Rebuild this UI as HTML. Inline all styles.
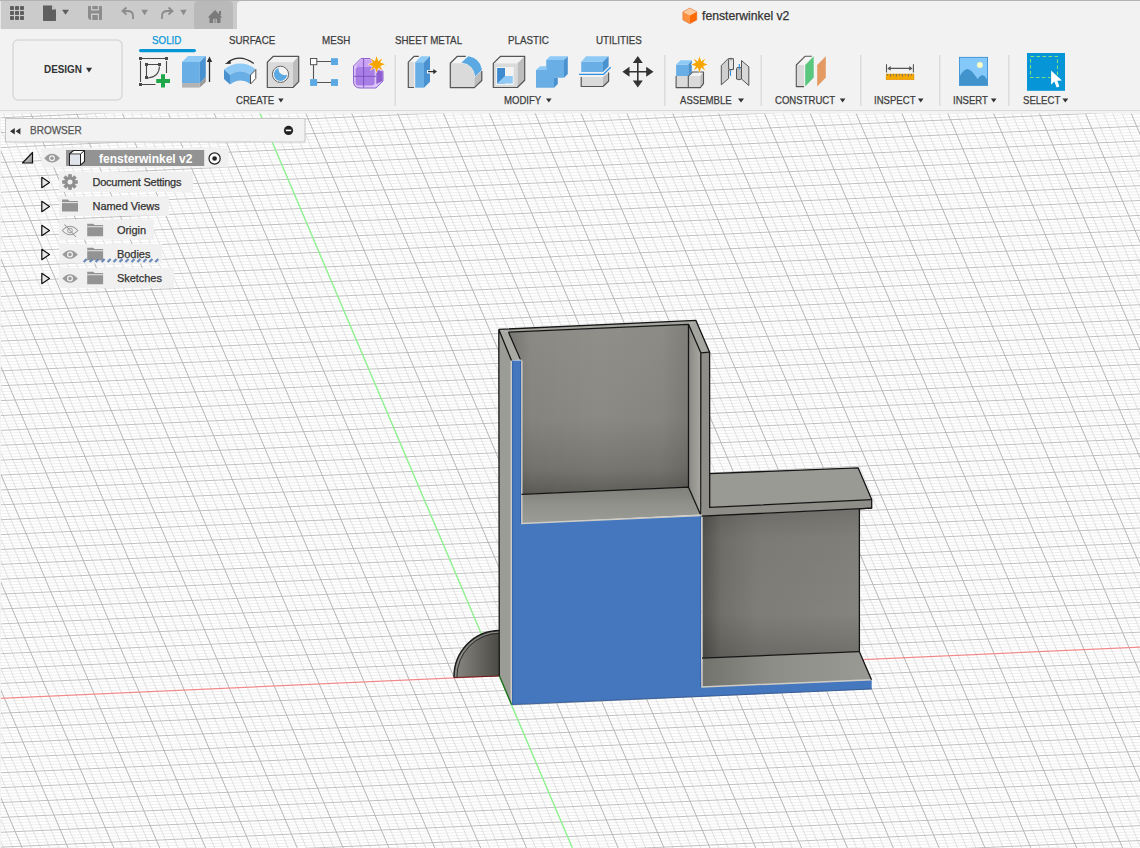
<!DOCTYPE html>
<html><head><meta charset="utf-8"><title>fensterwinkel v2</title>
<style>
html,body{margin:0;padding:0;width:1140px;height:848px;overflow:hidden;background:#f2f2f2;font-family:"Liberation Sans",sans-serif}
svg{position:absolute;left:0;top:0}
.t{position:absolute;white-space:nowrap;line-height:1;font-family:"Liberation Sans",sans-serif;-webkit-text-stroke:0.25px currentColor}
.tab{top:35px;font-size:11px;color:#3c3c3c;transform:scaleX(0.89);transform-origin:0 0}
.lbl{top:95px;font-size:11px;color:#3c3c3c;transform:scaleX(0.87);transform-origin:0 0}
.row{font-size:11px;color:#333;letter-spacing:-0.05px}
</style></head><body>
<svg width="1140" height="848" viewBox="0 0 1140 848">
<rect x="0" y="111" width="1140" height="737" fill="#ffffff"/>
<defs><clipPath id="vp"><rect x="0" y="111" width="1140" height="737"/></clipPath></defs>
<g clip-path="url(#vp)">
<path d="M0 111.9 L1140 60.6M0 114.87 L1140 63.57M0 120.83 L1140 69.53M0 123.8 L1140 72.5M0 126.78 L1140 75.48M0 129.76 L1140 78.46M0 135.71 L1140 84.41M0 138.69 L1140 87.39M0 141.67 L1140 90.37M0 144.64 L1140 93.34M0 150.6 L1140 99.3M0 153.57 L1140 102.27M0 156.55 L1140 105.25M0 159.53 L1140 108.23M0 165.48 L1140 114.18M0 168.46 L1140 117.16M0 171.44 L1140 120.13M0 174.41 L1140 123.11M0 180.37 L1140 129.07M0 183.34 L1140 132.04M0 186.32 L1140 135.02M0 189.3 L1140 138M0 195.25 L1140 143.95M0 198.23 L1140 146.93M0 201.21 L1140 149.9M0 204.18 L1140 152.88M0 210.14 L1140 158.84M0 213.11 L1140 161.81M0 216.09 L1140 164.79M0 219.07 L1140 167.77M0 225.02 L1140 173.72M0 228 L1140 176.7M0 230.98 L1140 179.67M0 233.95 L1140 182.65M0 239.91 L1140 188.61M0 242.88 L1140 191.58M0 245.86 L1140 194.56M0 248.84 L1140 197.54M0 254.79 L1140 203.49M0 257.77 L1140 206.47M0 260.75 L1140 209.44M0 263.72 L1140 212.42M0 269.68 L1140 218.38M0 272.65 L1140 221.35M0 275.63 L1140 224.33M0 278.61 L1140 227.31M0 284.56 L1140 233.26M0 287.54 L1140 236.24M0 290.52 L1140 239.21M0 293.49 L1140 242.19M0 299.45 L1140 248.15M0 302.42 L1140 251.12M0 305.4 L1140 254.1M0 308.38 L1140 257.08M0 314.33 L1140 263.03M0 317.31 L1140 266.01M0 320.29 L1140 268.98M0 323.26 L1140 271.96M0 329.22 L1140 277.92M0 332.19 L1140 280.89M0 335.17 L1140 283.87M0 338.15 L1140 286.85M0 344.1 L1140 292.8M0 347.08 L1140 295.78M0 350.06 L1140 298.75M0 353.03 L1140 301.73M0 358.99 L1140 307.69M0 361.96 L1140 310.66M0 364.94 L1140 313.64M0 367.92 L1140 316.62M0 373.87 L1140 322.57M0 376.85 L1140 325.55M0 379.83 L1140 328.52M0 382.8 L1140 331.5M0 388.76 L1140 337.46M0 391.73 L1140 340.43M0 394.71 L1140 343.41M0 397.69 L1140 346.39M0 403.64 L1140 352.34M0 406.62 L1140 355.32M0 409.6 L1140 358.29M0 412.57 L1140 361.27M0 418.53 L1140 367.23M0 421.5 L1140 370.2M0 424.48 L1140 373.18M0 427.46 L1140 376.16M0 433.41 L1140 382.11M0 436.39 L1140 385.09M0 439.37 L1140 388.06M0 442.34 L1140 391.04M0 448.3 L1140 397M0 451.27 L1140 399.97M0 454.25 L1140 402.95M0 457.23 L1140 405.93M0 463.18 L1140 411.88M0 466.16 L1140 414.86M0 469.14 L1140 417.83M0 472.11 L1140 420.81M0 478.07 L1140 426.77M0 481.04 L1140 429.74M0 484.02 L1140 432.72M0 487 L1140 435.7M0 492.95 L1140 441.65M0 495.93 L1140 444.63M0 498.91 L1140 447.6M0 501.88 L1140 450.58M0 507.84 L1140 456.54M0 510.81 L1140 459.51M0 513.79 L1140 462.49M0 516.77 L1140 465.47M0 522.72 L1140 471.42M0 525.7 L1140 474.4M0 528.68 L1140 477.38M0 531.65 L1140 480.35M0 537.61 L1140 486.31M0 540.58 L1140 489.28M0 543.56 L1140 492.26M0 546.54 L1140 495.24M0 552.49 L1140 501.19M0 555.47 L1140 504.17M0 558.45 L1140 507.14M0 561.42 L1140 510.12M0 567.38 L1140 516.08M0 570.35 L1140 519.05M0 573.33 L1140 522.03M0 576.31 L1140 525.01M0 582.26 L1140 530.96M0 585.24 L1140 533.94M0 588.22 L1140 536.91M0 591.19 L1140 539.89M0 597.15 L1140 545.85M0 600.12 L1140 548.82M0 603.1 L1140 551.8M0 606.08 L1140 554.78M0 612.03 L1140 560.73M0 615.01 L1140 563.71M0 617.99 L1140 566.68M0 620.96 L1140 569.66M0 626.92 L1140 575.62M0 629.89 L1140 578.59M0 632.87 L1140 581.57M0 635.85 L1140 584.55M0 641.8 L1140 590.5M0 644.78 L1140 593.48M0 647.75 L1140 596.45M0 650.73 L1140 599.43M0 656.69 L1140 605.39M0 659.66 L1140 608.36M0 662.64 L1140 611.34M0 665.62 L1140 614.32M0 671.57 L1140 620.27M0 674.55 L1140 623.25M0 677.53 L1140 626.22M0 680.5 L1140 629.2M0 686.46 L1140 635.16M0 689.43 L1140 638.13M0 692.41 L1140 641.11M0 695.39 L1140 644.09M0 701.34 L1140 650.04M0 704.32 L1140 653.02M0 707.3 L1140 656M0 710.27 L1140 658.97M0 716.23 L1140 664.93M0 719.2 L1140 667.9M0 722.18 L1140 670.88M0 725.16 L1140 673.86M0 731.11 L1140 679.81M0 734.09 L1140 682.79M0 737.07 L1140 685.76M0 740.04 L1140 688.74M0 746 L1140 694.7M0 748.97 L1140 697.67M0 751.95 L1140 700.65M0 754.93 L1140 703.63M0 760.88 L1140 709.58M0 763.86 L1140 712.56M0 766.84 L1140 715.53M0 769.81 L1140 718.51M0 775.77 L1140 724.47M0 778.74 L1140 727.44M0 781.72 L1140 730.42M0 784.7 L1140 733.4M0 790.65 L1140 739.35M0 793.63 L1140 742.33M0 796.61 L1140 745.3M0 799.58 L1140 748.28M0 805.54 L1140 754.24M0 808.51 L1140 757.21M0 811.49 L1140 760.19M0 814.47 L1140 763.17M0 820.42 L1140 769.12M0 823.4 L1140 772.1M0 826.38 L1140 775.07M0 829.35 L1140 778.05M0 835.31 L1140 784.01M0 838.28 L1140 786.98M0 841.26 L1140 789.96M0 844.24 L1140 792.94M0 850.19 L1140 798.89M0 853.17 L1140 801.87M0 856.14 L1140 804.85M0 859.12 L1140 807.82M0 865.08 L1140 813.78M0 868.05 L1140 816.75M0 871.03 L1140 819.73M0 874.01 L1140 822.71M0 879.96 L1140 828.66M0 882.94 L1140 831.64M0 885.91 L1140 834.62M0 888.89 L1140 837.59M0 894.85 L1140 843.55M0 897.82 L1140 846.52M0 900.8 L1140 849.5" stroke="#eeeeee" stroke-width="1" fill="none"/>
<path d="M-309.54 111 L3.84 848M-300.37 111 L13.01 848M-282.03 111 L31.35 848M-272.86 111 L40.52 848M-263.69 111 L49.69 848M-254.52 111 L58.86 848M-236.18 111 L77.2 848M-227.01 111 L86.37 848M-217.84 111 L95.54 848M-208.67 111 L104.71 848M-190.33 111 L123.05 848M-181.16 111 L132.22 848M-171.99 111 L141.39 848M-162.82 111 L150.56 848M-144.48 111 L168.9 848M-135.31 111 L178.07 848M-126.14 111 L187.24 848M-116.97 111 L196.41 848M-98.63 111 L214.75 848M-89.46 111 L223.92 848M-80.29 111 L233.09 848M-71.12 111 L242.26 848M-52.78 111 L260.6 848M-43.61 111 L269.77 848M-34.44 111 L278.94 848M-25.27 111 L288.11 848M-6.93 111 L306.45 848M2.24 111 L315.62 848M11.41 111 L324.79 848M20.58 111 L333.96 848M38.92 111 L352.3 848M48.09 111 L361.47 848M57.26 111 L370.64 848M66.43 111 L379.81 848M84.77 111 L398.15 848M93.94 111 L407.32 848M103.11 111 L416.49 848M112.28 111 L425.66 848M130.62 111 L444 848M139.79 111 L453.17 848M148.96 111 L462.34 848M158.13 111 L471.51 848M176.47 111 L489.85 848M185.64 111 L499.02 848M194.81 111 L508.19 848M203.98 111 L517.36 848M222.32 111 L535.7 848M231.49 111 L544.87 848M240.66 111 L554.04 848M249.83 111 L563.21 848M268.17 111 L581.55 848M277.34 111 L590.72 848M286.51 111 L599.89 848M295.68 111 L609.06 848M314.02 111 L627.4 848M323.19 111 L636.57 848M332.36 111 L645.74 848M341.53 111 L654.91 848M359.87 111 L673.25 848M369.04 111 L682.42 848M378.21 111 L691.59 848M387.38 111 L700.76 848M405.72 111 L719.1 848M414.89 111 L728.27 848M424.06 111 L737.44 848M433.23 111 L746.61 848M451.57 111 L764.95 848M460.74 111 L774.12 848M469.91 111 L783.29 848M479.08 111 L792.46 848M497.42 111 L810.8 848M506.59 111 L819.97 848M515.76 111 L829.14 848M524.93 111 L838.31 848M543.27 111 L856.65 848M552.44 111 L865.82 848M561.61 111 L874.99 848M570.78 111 L884.16 848M589.12 111 L902.5 848M598.29 111 L911.67 848M607.46 111 L920.84 848M616.63 111 L930.01 848M634.97 111 L948.35 848M644.14 111 L957.52 848M653.31 111 L966.69 848M662.48 111 L975.86 848M680.82 111 L994.2 848M689.99 111 L1003.37 848M699.16 111 L1012.54 848M708.33 111 L1021.71 848M726.67 111 L1040.05 848M735.84 111 L1049.22 848M745.01 111 L1058.39 848M754.18 111 L1067.56 848M772.52 111 L1085.9 848M781.69 111 L1095.07 848M790.86 111 L1104.24 848M800.03 111 L1113.41 848M818.37 111 L1131.75 848M827.54 111 L1140.92 848M836.71 111 L1150.09 848M845.88 111 L1159.26 848M864.22 111 L1177.6 848M873.39 111 L1186.77 848M882.56 111 L1195.94 848M891.73 111 L1205.11 848M910.07 111 L1223.45 848M919.24 111 L1232.62 848M928.41 111 L1241.79 848M937.58 111 L1250.96 848M955.92 111 L1269.3 848M965.09 111 L1278.47 848M974.26 111 L1287.64 848M983.43 111 L1296.81 848M1001.77 111 L1315.15 848M1010.94 111 L1324.32 848M1020.11 111 L1333.49 848M1029.28 111 L1342.66 848M1047.62 111 L1361 848M1056.79 111 L1370.17 848M1065.96 111 L1379.34 848M1075.13 111 L1388.51 848M1093.47 111 L1406.85 848M1102.64 111 L1416.02 848M1111.81 111 L1425.19 848M1120.98 111 L1434.36 848M1139.32 111 L1452.7 848" stroke="#e0e0e0" stroke-width="1" fill="none"/>
<path d="M0 117.85 L1140 66.55M0 132.73 L1140 81.43M0 147.62 L1140 96.32M0 162.5 L1140 111.2M0 177.39 L1140 126.09M0 192.27 L1140 140.97M0 207.16 L1140 155.86M0 222.04 L1140 170.74M0 236.93 L1140 185.63M0 251.81 L1140 200.51M0 266.7 L1140 215.4M0 281.58 L1140 230.28M0 296.47 L1140 245.17M0 311.35 L1140 260.05M0 326.24 L1140 274.94M0 341.12 L1140 289.82M0 356.01 L1140 304.71M0 370.89 L1140 319.59M0 385.78 L1140 334.48M0 400.66 L1140 349.36M0 415.55 L1140 364.25M0 430.43 L1140 379.13M0 445.32 L1140 394.02M0 460.2 L1140 408.9M0 475.09 L1140 423.79M0 489.97 L1140 438.67M0 504.86 L1140 453.56M0 519.74 L1140 468.44M0 534.63 L1140 483.33M0 549.51 L1140 498.21M0 564.4 L1140 513.1M0 579.28 L1140 527.98M0 594.17 L1140 542.87M0 609.05 L1140 557.75M0 623.94 L1140 572.64M0 638.82 L1140 587.52M0 653.71 L1140 602.41M0 668.59 L1140 617.29M0 683.48 L1140 632.18M0 713.25 L1140 661.95M0 728.13 L1140 676.83M0 743.02 L1140 691.72M0 757.9 L1140 706.6M0 772.79 L1140 721.49M0 787.67 L1140 736.37M0 802.56 L1140 751.26M0 817.44 L1140 766.14M0 832.33 L1140 781.03M0 847.21 L1140 795.91M0 862.1 L1140 810.8M0 876.98 L1140 825.68M0 891.87 L1140 840.57" stroke="#c0c0c0" stroke-width="1" fill="none"/>
<path d="M-291.2 111 L22.18 848M-245.35 111 L68.03 848M-199.5 111 L113.88 848M-153.65 111 L159.73 848M-107.8 111 L205.58 848M-61.95 111 L251.43 848M-16.1 111 L297.28 848M29.75 111 L343.13 848M75.6 111 L388.98 848M121.45 111 L434.83 848M167.3 111 L480.68 848M213.15 111 L526.53 848M304.85 111 L618.23 848M350.7 111 L664.08 848M396.55 111 L709.93 848M442.4 111 L755.78 848M488.25 111 L801.63 848M534.1 111 L847.48 848M579.95 111 L893.33 848M625.8 111 L939.18 848M671.65 111 L985.03 848M717.5 111 L1030.88 848M763.35 111 L1076.73 848M809.2 111 L1122.58 848M855.05 111 L1168.43 848M900.9 111 L1214.28 848M946.75 111 L1260.13 848M992.6 111 L1305.98 848M1038.45 111 L1351.83 848M1084.3 111 L1397.68 848M1130.15 111 L1443.53 848" stroke="#b6b6b6" stroke-width="1" fill="none"/>
<path d="M0 698.36 L1140 647.06" stroke="#f08a8a" stroke-width="1.2" fill="none"/>
<path d="M259 111 L572.38 848" stroke="#8ef08e" stroke-width="1.4" fill="none"/>
</g>
<rect x="0" y="111" width="1" height="737" fill="#f2f2f2"/>
<rect x="0" y="111" width="1140" height="2.5" fill="#f2f2f2"/>
<defs>
<linearGradient id="gBack1" x1="0" y1="0" x2="0" y2="1">
<stop offset="0" stop-color="#908f8a"/><stop offset="0.55" stop-color="#8a8984"/><stop offset="0.85" stop-color="#777671"/><stop offset="1" stop-color="#5e5d58"/>
</linearGradient>
<linearGradient id="gBack1h" x1="0" y1="0" x2="1" y2="0">
<stop offset="0" stop-color="#000" stop-opacity="0.18"/><stop offset="0.12" stop-color="#000" stop-opacity="0.04"/><stop offset="0.5" stop-color="#000" stop-opacity="0"/><stop offset="0.85" stop-color="#000" stop-opacity="0.03"/><stop offset="1" stop-color="#000" stop-opacity="0.12"/>
</linearGradient>
<linearGradient id="gBack2" x1="0" y1="0" x2="1" y2="0">
<stop offset="0" stop-color="#545350"/><stop offset="0.12" stop-color="#706f6a"/><stop offset="0.35" stop-color="#7e7d78"/><stop offset="1" stop-color="#84837e"/>
</linearGradient>
<linearGradient id="gBack2v" x1="0" y1="0" x2="0" y2="1">
<stop offset="0" stop-color="#000" stop-opacity="0.14"/><stop offset="0.2" stop-color="#000" stop-opacity="0.03"/><stop offset="0.7" stop-color="#000" stop-opacity="0.0"/><stop offset="1" stop-color="#000" stop-opacity="0.16"/>
</linearGradient>
<linearGradient id="gFloor1" x1="0" y1="0" x2="0" y2="1"><stop offset="0" stop-color="#80807b"/><stop offset="0.5" stop-color="#92928c"/><stop offset="1" stop-color="#9c9c96"/></linearGradient>
<linearGradient id="gFloor2" x1="0" y1="0" x2="1" y2="0">
<stop offset="0" stop-color="#72726d"/><stop offset="0.4" stop-color="#8d8d87"/><stop offset="1" stop-color="#9a9a94"/>
</linearGradient>
<linearGradient id="gQuarter" x1="0" y1="0" x2="1" y2="0">
<stop offset="0" stop-color="#8a8984"/><stop offset="0.5" stop-color="#6a6964"/><stop offset="1" stop-color="#4a4944"/>
</linearGradient>
<linearGradient id="gRW" x1="0" y1="0" x2="1" y2="0">
<stop offset="0" stop-color="#8a8984"/><stop offset="1" stop-color="#a8a8a2"/>
</linearGradient>
</defs>
<!-- quarter disk -->
<path d="M499.5 676 L454 677.5 A45.5 46.5 0 0 1 499.5 630.5 Z" fill="url(#gQuarter)"/>
<path d="M454 677.5 A45.5 46.5 0 0 1 499.5 630.5" fill="none" stroke="#1a1a1a" stroke-width="1.5"/>
<path d="M455.6 677.4 A44 45 0 0 1 499.5 632" fill="none" stroke="#8f8f8a" stroke-width="1"/>
<path d="M456.9 677.3 A42.7 43.7 0 0 1 499.5 633.3" fill="none" stroke="#222" stroke-width="0.9"/>
<path d="M454 677.5 L499.5 676" fill="none" stroke="#6a1a1a" stroke-width="1"/>
<!-- left wall outer face -->
<path d="M498.8 329.4 L511.5 360.5 L511.6 704.6 L499.3 676 Z" fill="#9c9c96"/>
<!-- back wall top strip -->
<path d="M498.8 329.4 L695.9 320.4 L688.5 324.3 L508.5 332.2 Z" fill="#a5a59f"/>
<!-- left wall top face -->
<path d="M498.8 329.4 L508.5 332.2 L520.5 359.5 L511.5 360.5 Z" fill="#a9a9a3"/>
<!-- back wall inner face box1 -->
<path d="M508.5 332.2 L688.5 324.3 L688.5 487.2 L521.5 494.3 L521.2 359.5 Z" fill="url(#gBack1)"/>
<path d="M508.5 332.2 L688.5 324.3 L688.5 487.2 L521.5 494.3 L521.2 359.5 Z" fill="url(#gBack1h)"/>
<!-- right wall inner face box1 -->
<path d="M688.5 324.3 L700.8 352.8 L700.8 514 L688.5 487.2 Z" fill="url(#gRW)"/>
<!-- right wall top face -->
<path d="M688.5 324.3 L695.9 320.4 L709.6 352.2 L700.8 352.8 Z" fill="#a6a6a0"/>
<!-- right wall front face + shelf front face -->
<path d="M700.8 352.8 L709.6 352.2 L709.7 507.4 L871.7 499.6 L871.7 508.2 L701.5 516.2 Z" fill="#8f8d88"/>
<!-- shelf top -->
<path d="M709.7 473.6 L858.1 467.8 L871.7 499.6 L709.7 507.4 Z" fill="#9a9a94"/>
<!-- floor box1 -->
<path d="M521.5 494.3 L688.5 487.2 L700.5 514.5 L521.5 523.5 Z" fill="url(#gFloor1)"/>
<!-- box2 back face -->
<path d="M702 516.2 L859.4 508.8 L859.4 651.7 L702 658.2 Z" fill="url(#gBack2)"/>
<path d="M702 516.2 L859.4 508.8 L859.4 651.7 L702 658.2 Z" fill="url(#gBack2v)"/>
<!-- box2 floor -->
<path d="M702 658.2 L859.3 651.7 L871.5 679.7 L701.2 687 Z" fill="url(#gFloor2)"/>
<!-- blue face -->
<path d="M511.6 360.5 L521 360.5 L521 523.5 L701 515.5 L701 687 L871.7 679.7 L871.7 689 L511.6 704.6 Z" fill="#4577be"/>
<!-- light outlines on blue -->
<path d="M511.3 360.5 L511.3 704 M521.8 360.5 L521.8 523.5 L701 515.5 M702 516 L702 687 L871.7 679.7" fill="none" stroke="#cfccc6" stroke-width="1.5"/>
<path d="M512.6 361 V704 M520.6 361 V523 M700.6 516 V687" stroke="#2f5faa" stroke-width="0.8"/>
<!-- dark edges -->
<g fill="none" stroke="#151515" stroke-width="1.3" stroke-linejoin="round">
<path d="M498.8 329.4 L695.9 320.4 L709.6 352.2 L709.7 473.6 L858.1 467.8 L871.7 499.6 L871.7 508.2 L859.4 508.8 L859.4 651.7 L871.5 679.7"/>
<path d="M498.8 329.4 L499.3 676 M498.8 329.4 L511.5 360.5"/>
<path d="M508.5 332.2 L688.5 324.3 L688.5 487.2 M508.5 332.2 L520.5 359.5"/>
<path d="M688.5 324.3 L700.8 352.8 L709.6 352.2 M700.8 352.8 L700.8 514"/>
<path d="M521.5 494.3 L688.5 487.2 L700.5 514.5"/>
<path d="M709.7 473.6 L709.7 507.4 L871.7 499.6 M701.5 516.2 L871.7 508.2"/>
<path d="M702 658.2 L859.3 651.7"/>
</g>
<path d="M499.5 676 L511.6 704.6" stroke="#1d6a1d" stroke-width="1.3"/>
<path d="M511.6 704.6 L871.7 689" stroke="#2a4f8a" stroke-width="0.8"/>
<!-- top bar -->
<rect x="0" y="0" width="1140" height="29" fill="#cbcbcb"/>
<rect x="0" y="0" width="1140" height="1" fill="#b3b3b3"/>
<rect x="0" y="1" width="1" height="28" fill="#e6e6e6"/>
<path d="M237 29 V5 Q237 1 241 1 H1140 V29 Z" fill="#f2f2f2"/>
<path d="M194 29 V5 Q194 1 198 1 H229 Q233 1 233 5 V29 Z" fill="#b9b9b9"/>
<!-- app grid icon -->
<g fill="#5f5f5f">
<rect x="10" y="6" width="4" height="4" rx="0.8"/><rect x="15" y="6" width="4" height="4" rx="0.8"/><rect x="20" y="6" width="4" height="4" rx="0.8"/>
<rect x="10" y="11" width="4" height="4" rx="0.8"/><rect x="15" y="11" width="4" height="4" rx="0.8"/><rect x="20" y="11" width="4" height="4" rx="0.8"/>
<rect x="10" y="16" width="4" height="4" rx="0.8"/><rect x="15" y="16" width="4" height="4" rx="0.8"/><rect x="20" y="16" width="4" height="4" rx="0.8"/>
</g>
<!-- file icon -->
<path d="M43 5.5 H52 L56 9.5 V20.3 Q56 21 55.3 21 H43.7 Q43 21 43 20.3 Z" fill="#5f5f5f"/>
<path d="M52 5.5 L56 9.5 H52 Z" fill="#cbcbcb"/>
<path d="M62 9.8 H69 L65.5 14.7 Z" fill="#5f5f5f"/>
<!-- save icon -->
<path d="M88 6 H101 Q102 6 102 7 V19 Q102 20 101 20 H90 L88 18 Z" fill="#8c8c8c"/>
<rect x="91" y="6" width="8" height="4.5" fill="#cbcbcb"/>
<rect x="92.3" y="6" width="5.5" height="3.2" fill="#8c8c8c"/>
<rect x="91" y="13.5" width="8" height="6.5" fill="#cbcbcb"/>
<rect x="92.3" y="15" width="5.5" height="5" fill="#8c8c8c"/>
<!-- undo -->
<path d="M133 19 V16 Q133 11 127.5 11 H123" fill="none" stroke="#8c8c8c" stroke-width="1.8"/>
<path d="M126.5 7.5 L122.5 11 L126.5 14.5" fill="none" stroke="#8c8c8c" stroke-width="1.8"/>
<path d="M141.3 9.8 H148 L144.6 15.2 Z" fill="#8c8c8c"/>
<!-- redo -->
<path d="M162 19 V16 Q162 11 167.5 11 H172" fill="none" stroke="#8c8c8c" stroke-width="1.8"/>
<path d="M168.5 7.5 L172.5 11 L168.5 14.5" fill="none" stroke="#8c8c8c" stroke-width="1.8"/>
<path d="M180.2 9.8 H186.8 L183.5 15.2 Z" fill="#8c8c8c"/>
<!-- home -->
<path d="M207.7 17.5 L215 10 L222.4 17.5 H220.5 V23 H217 V19 H213 V23 H209.5 V17.5 Z" fill="#7a7a7a"/>
<rect x="219" y="11" width="2" height="4" fill="#7a7a7a"/>
<rect x="213.8" y="18.5" width="2.4" height="4.5" fill="#999"/>
<!-- title cube -->
<path d="M689.8 8 L696.8 11.8 L689.8 15.6 L682.9 11.8 Z" fill="#ffc89a"/>
<path d="M682.9 11.8 L689.8 15.6 V23.7 L682.9 19.9 Z" fill="#ff9040"/>
<path d="M696.8 11.8 L689.8 15.6 V23.7 L696.8 19.9 Z" fill="#ff6a00"/>
<path d="M689.8 8 L696.8 11.8 V19.9 L689.8 23.7 L682.9 19.9 V11.8 Z" fill="none" stroke="#e07030" stroke-width="0.6"/>
<!-- toolbar bottom line -->
<rect x="0" y="110" width="1140" height="1" fill="#d9d9d9"/>
<!-- DESIGN button -->
<rect x="13" y="40" width="109" height="60" rx="5" fill="#f2f2f2" stroke="#d9d9d9" stroke-width="1.5"/>
<path d="M86 67.8 H92.1 L89 72.4 Z" fill="#333"/>
<!-- SOLID underline -->
<rect x="139" y="49" width="57" height="3.2" rx="1.6" fill="#0696d7"/>
<!-- separators -->
<g fill="#dcdcdc">
<rect x="394.5" y="55" width="1.5" height="51"/>
<rect x="664" y="55" width="1.5" height="51"/>
<rect x="760.5" y="55" width="1.5" height="51"/>
<rect x="860" y="55" width="1.5" height="51"/>
<rect x="939" y="55" width="1.5" height="51"/>
<rect x="1008" y="55" width="1.5" height="51"/>
</g>
<!-- label triangles -->
<g fill="#333">
<path d="M278.2 98.5 H283.6 L280.9 102.5 Z"/>
<path d="M546 98.5 H551.6 L548.8 102.5 Z"/>
<path d="M738 98.5 H744 L741 102.5 Z"/>
<path d="M839.8 98.5 H845.4 L842.6 102.5 Z"/>
<path d="M918 98.5 H923.5 L920.7 102.5 Z"/>
<path d="M990.9 98.5 H996.5 L993.7 102.5 Z"/>
<path d="M1062.4 98.5 H1068.3 L1065.3 102.5 Z"/>
</g>
<!-- 1 sketch -->
<g>
<g fill="none" stroke="#4a4a4a" stroke-width="1.1">
<path d="M142 58.5 H165 M140.5 61 V82 M166.5 61 V73 M142 84.5 H155.5"/>
<path d="M148 64.5 H158 M146.5 66 V76 M159.5 66.5 Q159 77 148 78"/>
</g>
<g fill="#4a4a4a">
<rect x="139" y="57" width="3" height="3"/><rect x="165" y="57" width="3" height="3"/><rect x="139" y="83" width="3" height="3"/>
<rect x="145" y="63" width="3" height="3"/><rect x="158" y="63" width="3" height="3"/><rect x="145" y="76" width="3" height="3"/>
</g>
<path d="M161 74.2 H165 V79 H170 V83 H165 V87.6 H161 V83 H156.2 V79 H161 Z" fill="#1fa84a"/>
</g>
<!-- 2 extrude -->
<g>
<path d="M182 83 H199.8 V87.6 H182 Z" fill="#b4b4b4"/>
<path d="M199.8 83 L205.8 77 V82 L199.8 87.6 Z" fill="#9a9a9a"/>
<path d="M182 62 H199.8 V83 H182 Z" fill="#6aaee6"/>
<path d="M182 62 L188 56 H205.8 L199.8 62 Z" fill="#8fcaf7"/>
<path d="M199.8 62 L205.8 56 V77 L199.8 83 Z" fill="#4a91cf"/>
<path d="M209.5 60 V82" stroke="#2e2e2e" stroke-width="1.3"/>
<path d="M206.8 62 L209.5 56.5 L212.2 62 Z" fill="#2e2e2e"/>
</g>
<!-- 3 revolve -->
<g>
<path d="M224 69.5 Q240 58 255.5 69 L250.5 75 Q240 67.5 230 75 Z" fill="#8fcaf7"/>
<path d="M224 69.5 L230 75 V84.5 L224 79 Z" fill="#4a91cf"/>
<path d="M230 75 Q240 67.5 250.5 75 V84 Q240 77 230 84.5 Z" fill="#6aaee6"/>
<path d="M250.5 75 L255.8 69.5 V78.5 L250.5 84 Z" fill="#fff" stroke="#4a4a4a" stroke-width="1"/>
<path d="M253.8 63.5 Q240 53.5 228 62" fill="none" stroke="#2e2e2e" stroke-width="1.1"/>
<path d="M224.8 64 L230.5 60 L230.8 63.8 Z" fill="#2e2e2e"/>
</g>
<!-- 4 hole -->
<path d="M267.3 62.2 L273.3 56.3 H298.7 L293 62.2 Z" fill="#f2f2f2"/>
<path d="M293 62.2 L298.7 56.3 V81.7 L293 87.5 Z" fill="#bdbdbd"/>
<path d="M267.3 62.2 H293 V87.5 H267.3 Z" fill="#dadada"/>
<path d="M267.3 62.2 L273.3 56.3 H298.7 V81.7 L293 87.5 H267.3 Z" fill="none" stroke="#555" stroke-width="1.2" stroke-linejoin="round"/>
<circle cx="280.5" cy="74.3" r="8.1" fill="#f4f4f4" stroke="#555" stroke-width="0.9"/>
<path d="M278.69 67.95 A6.6 6.6 0 1 0 287.09 74.77 A6.2 6.2 0 0 1 278.69 67.95 Z" fill="#5aa9e3"/>
<!-- 5 pattern -->
<g>
<path d="M317 61.5 H331 M317 82.5 H331 M313.5 64.7 V79" stroke="#555" stroke-width="1.1"/>
<rect x="310.5" y="58.5" width="6.3" height="6.2" fill="#fff" stroke="#555" stroke-width="1"/>
<rect x="331" y="58.2" width="7" height="6.8" fill="#5aa9e3"/>
<rect x="310.1" y="79.1" width="7" height="6.8" fill="#5aa9e3"/>
<rect x="331" y="79.1" width="7" height="6.8" fill="#5aa9e3"/>
</g>
<!-- 6 form -->
<g>
<path d="M353.5 66 L361 58.5 H370 L383 71 V81 L376 88 H360 Q353.5 88 353.5 81 Z" fill="#dcc6f7" stroke="#8f63cf" stroke-width="1"/>
<path d="M356 65.5 L361.5 59.5 H370 L375.5 65 L372 67.5 H357 Z" fill="#c9a2f5"/>
<rect x="355.6" y="67" width="19" height="18.6" rx="3" fill="#a97de6"/>
<path d="M376.3 69.6 L382.5 71.5 V81 L376.3 84 Z" fill="#8f5fcf"/>
<path d="M363.6 58.8 V87.5 M354 76.3 H376" stroke="#7a4fb8" stroke-width="0.9"/>
<path d="M376.6 56 L378.3 61.2 L382.5 58.3 L380.2 62.6 L385 64.3 L380.2 66 L382.5 70.3 L378.3 67.4 L376.6 72.6 L374.9 67.4 L370.7 70.3 L373 66 L368.2 64.3 L373 62.6 L370.7 58.3 L374.9 61.2 Z" fill="#f7a600" stroke="#fff" stroke-width="0.7" paint-order="stroke"/>
</g>
<!-- 7 press pull -->
<path d="M408.8 62.1 L414.5 56.5 H421 L415 62.1 Z" fill="#f5f5f5"/>
<rect x="408.8" y="62.1" width="5.4" height="25.4" fill="#dadada"/>
<path d="M418.8 56.3 H414.2 L408.3 62.1 V87.5 H414" fill="none" stroke="#555" stroke-width="1.2" stroke-linejoin="round"/>
<path d="M415.2 62.2 H424 V87.7 H415.2 Z" fill="#6aaee6"/>
<path d="M415.2 62.2 L421 56.3 H430 L424 62.2 Z" fill="#8fcaf7"/>
<path d="M424 62.2 L430 56.3 V81.7 L424 87.7 Z" fill="#4a91cf"/>
<rect x="427" y="70.2" width="4" height="3.2" fill="#fff"/>
<path d="M428 71.6 H434.5" stroke="#2e2e2e" stroke-width="1.3"/>
<path d="M433.3 69 L437 71.6 L433.3 74.2 Z" fill="#2e2e2e"/>
<!-- 8 fillet -->
<path d="M450.3 63.3 L457.4 56.3 H468.3 L461.5 62.8 Z" fill="#f5f5f5"/>
<path d="M450.3 63.3 H461.5 Q474 65 474.8 77.5 V87.6 H450.3 Z" fill="#dadada"/>
<path d="M461.5 62.6 L468.3 56.3 Q480 58 482 69.8 L475.3 76.5 Q473.5 64.5 461.5 62.6 Z" fill="#5aa9e3"/>
<path d="M474.8 77.3 L481.8 70.8 V80.5 L474.4 87.6 Z" fill="#bdbdbd"/>
<path d="M465.8 56.3 H457.4 L450.3 63.3 V87.6 H474.4 L481.8 80.5 V71" fill="none" stroke="#555" stroke-width="1.2" stroke-linejoin="round"/>
<!-- 9 shell -->
<path d="M493.3 63.4 L500.6 56.3 H524.7 L517.4 63.4 Z" fill="#f2f2f2"/>
<path d="M517.4 63.4 L524.7 56.3 V80.3 L517.4 87.5 Z" fill="#bdbdbd"/>
<path d="M493.3 63.4 H517.4 V87.5 H493.3 Z" fill="#dadada"/>
<path d="M493.3 63.4 L500.6 56.3 H524.7 V80.3 L517.4 87.5 H493.3 Z" fill="none" stroke="#555" stroke-width="1.2" stroke-linejoin="round"/>
<rect x="496.1" y="67" width="17.7" height="18" fill="#f3f3f3"/>
<path d="M497.1 68 H505 V83.5 H497.1 Z" fill="#3f8bd0"/>
<path d="M497.1 83.5 L505 76.1 H512.8 V83.5 Z" fill="#8fcaf7"/>
<!-- 10 combine -->
<path d="M536 70.1 H546.2 V60.1 H564 V77.8 H554 V87.8 H536 Z" fill="#6aaee6"/>
<path d="M536 70.1 L540 66.2 H546.2 V70.1 Z M546.2 60.1 L550 56.2 H567.8 L564 60.1 Z" fill="#8fcaf7"/>
<path d="M564 60.1 L567.8 56.2 V74 L564 77.8 Z M554 77.8 H557.8 V84 L554 87.8 Z" fill="#4a91cf"/>
<!-- 11 split -->
<path d="M581.2 77 H603 V86.5 H581.2 Z" fill="#dadada"/>
<path d="M603 77 L608.6 72.5 V81.3 L603 86.5 Z" fill="#bdbdbd"/>
<path d="M581.2 77 V86.5 H603 L608.6 81.3 V72.5" fill="none" stroke="#555" stroke-width="1.2" stroke-linejoin="round"/>
<path d="M581.2 61.8 L586 56.3 H608.6 L603 61.8 Z" fill="#8fcaf7"/>
<path d="M581.2 61.8 H603 V72 H581.2 Z" fill="#6aaee6"/>
<path d="M603 61.8 L608.6 56.3 V66.5 L603 72 Z" fill="#4a91cf"/>
<path d="M579 74.3 H603.5 L610.7 67.3" fill="none" stroke="#2f8fe0" stroke-width="1.2"/>
<!-- 12 move -->
<g fill="#333">
<path d="M637.8 61 V82.5 M626 71.8 H649.5" stroke="#333" stroke-width="1.6"/>
<path d="M632.8 63 L637.8 56 L642.8 63 Z"/>
<path d="M632.8 80.5 L637.8 87.5 L642.8 80.5 Z"/>
<path d="M629.5 66.8 L622.4 71.8 L629.5 76.8 Z"/>
<path d="M646.2 66.8 L653.5 71.8 L646.2 76.8 Z"/>
</g>
<!-- 13 new component -->
<path d="M676.1 76 H700.3 V87.6 H676.1 Z" fill="#dadada"/>
<path d="M688.3 76 L692.5 72 H703.5 L700.3 76 Z" fill="#f2f2f2"/>
<path d="M700.3 76 L703.5 72 V83.6 L700.3 87.6 Z" fill="#bdbdbd"/>
<path d="M676.1 76 V87.6 H700.3 L703.5 83.6 V72 H692.5 L688.3 76 M688.3 76 V87.6" fill="none" stroke="#555" stroke-width="1.1" stroke-linejoin="round"/>
<path d="M676.1 64.5 H688.3 V76 H676.1 Z" fill="#6aaee6"/>
<path d="M676.1 64.5 L680.5 60.3 H691.8 L688.3 64.5 Z" fill="#8fcaf7"/>
<path d="M688.3 64.5 L691.8 60.3 V72.3 L688.3 76 Z" fill="#4a91cf"/>
<path d="M699.5 56.3 L701.2 61.4 L705.3 58.5 L703.1 62.8 L707.7 64.5 L703.1 66.2 L705.3 70.5 L701.2 67.6 L699.5 72.7 L697.8 67.6 L693.7 70.5 L695.9 66.2 L691.3 64.5 L695.9 62.8 L693.7 58.5 L697.8 61.4 Z" fill="#f7a600" stroke="#fff" stroke-width="0.7" paint-order="stroke"/>
<!-- 14 joint -->
<g stroke="#555" stroke-width="1" stroke-linejoin="round">
<path d="M721.3 65.5 L728 58.8 H733.5 V69.5 L728.6 70 V78.5 L721.3 84.8 Z" fill="#cfcfcf"/>
<path d="M728.6 59.5 Q728.6 58.3 731 58.3 Q733.5 58.3 733.5 59.5 V69 Q731 70.5 728.6 69 Z" fill="#e4e4e4"/>
<path d="M741.5 60.5 L748.8 66.8 V85.5 L741.5 79 Z" fill="#d8d8d8"/>
<path d="M736.5 68.5 Q736.5 67.3 739 67.3 Q741.5 67.3 741.5 68.5 V79 Q739 80.5 736.5 79 Z" fill="#bdbdbd"/>
</g>
<ellipse cx="731" cy="59.6" rx="1.6" ry="0.8" fill="#999"/>
<path d="M730.5 70.5 V75.8 M739.3 64 V69.5" stroke="#2f8fe0" stroke-width="1.1"/>
<!-- 15 construct -->
<path d="M797 65 L805 56.3 H813 L805 65 Z" fill="#f5f5f5"/>
<path d="M796.8 65 H804 V86.5 H796.8 Z" fill="#dadada"/>
<path d="M811.8 56.3 H805 L796.3 65 V86.6 H804" fill="none" stroke="#555" stroke-width="1.1" stroke-linejoin="round"/>
<path d="M805.2 65 L813.7 56.3 V77.5 L805.2 86.5 Z" fill="#5ac77e"/>
<path d="M817.2 65 L825.8 56.3 V77.5 L817.2 86.5 Z" fill="#e49a63"/>
<!-- 16 measure -->
<path d="M886.5 64.2 V72.5 M913.4 64.2 V72.5 M889 68.4 H911" stroke="#555" stroke-width="1.1"/>
<path d="M887.3 68.4 L890.7 66 V70.8 Z M912.6 68.4 L909.2 66 V70.8 Z" fill="#555"/>
<rect x="886.2" y="74.1" width="27.7" height="5.6" fill="#f5a800" stroke="#e29200" stroke-width="0.6"/>
<path d="M887.4 74.1 V75.5 M890.4 74.1 V76.6 M893.4 74.1 V75.5 M896.4 74.1 V76.6 M899.4 74.1 V75.5 M902.4 74.1 V76.6 M905.4 74.1 V75.5 M908.4 74.1 V76.6 M911.4 74.1 V75.5" stroke="#666" stroke-width="0.9"/>
<!-- 17 insert -->
<rect x="959" y="56.9" width="29" height="29" fill="#3a8fd0"/>
<rect x="959.8" y="57.7" width="27.4" height="27.4" fill="#85c8fa"/>
<path d="M959.8 76 Q964 69 967.6 69 Q971 69 977.8 79.3 Q980 75.2 982.5 75.2 Q985 75.2 987.2 80 V85.1 H959.8 Z" fill="#4193cc"/>
<circle cx="979.9" cy="65" r="3.2" fill="#ffffc8" stroke="#6fb5ea" stroke-width="0.4"/>
<!-- 18 select -->
<rect x="1027" y="53" width="38" height="37.8" fill="#0696d7"/>
<rect x="1030.5" y="56.5" width="27" height="21" fill="none" stroke="#7ee07e" stroke-width="1.1" stroke-dasharray="3.6 2.4"/>
<path d="M1051.1 70.4 L1051.1 84.8 L1054.3 81.5 L1056.7 87.6 L1059.4 86.5 L1057.3 80.8 L1061.9 80.5 Z" fill="#fff" stroke="#0696d7" stroke-width="1.2" paint-order="stroke"/>
<!-- browser header -->
<rect x="5.5" y="118.5" width="299.5" height="23.5" fill="#f2f2f2" stroke="#c6c6c6" stroke-width="1"/>
<path d="M14.8 128 V134.4 L10 131.2 Z M20.4 128 V134.4 L15.6 131.2 Z" fill="#333"/>
<circle cx="288.5" cy="130.4" r="4.6" fill="#222"/>
<rect x="285.8" y="129.6" width="5.4" height="1.6" fill="#fff"/>
<!-- rows bg -->
<g fill="#f0f0f0">
<rect x="41.5" y="148" width="187" height="19.5"/>
<rect x="59" y="171.7" width="134" height="20.2"/>
<rect x="59" y="196.3" width="110" height="19.4"/>
<rect x="59" y="219.5" width="95" height="20.1"/>
<rect x="59" y="244" width="103" height="19.5"/>
<rect x="59" y="268" width="115" height="20.1"/>
</g>
<!-- root triangle -->
<defs><linearGradient id="gTri" x1="0" y1="0" x2="1" y2="1"><stop offset="0" stop-color="#f4f4f4"/><stop offset="1" stop-color="#8a8a8a"/></linearGradient></defs>
<path d="M32.5 152.5 V163 H22.5 Z" fill="url(#gTri)" stroke="#111" stroke-width="1.2" stroke-linejoin="round"/>
<!-- root eye -->
<path d="M44.3 158.2 Q52 149.5 59.8 158.2 Q52 166.8 44.3 158.2 Z" fill="#9a9a9a"/>
<circle cx="52" cy="158.2" r="3" fill="#f0f0f0"/>
<circle cx="52" cy="158.2" r="1.7" fill="#9a9a9a"/>
<!-- component bg -->
<rect x="66" y="150" width="138.2" height="16" fill="#939393"/>
<path d="M69.5 154 L73.5 150.5 H84.5 V161.5 L80.5 165.2 H69.5 Z" fill="#fff" stroke="#222" stroke-width="1.1" stroke-linejoin="round"/>
<path d="M69.5 154 H80.5 V165.2 M80.5 154 L84.5 150.5" fill="none" stroke="#222" stroke-width="1"/>
<path d="M70.3 154.8 H79.8 V164.5 H70.3 Z" fill="#dfe3ea"/>
<!-- radio -->
<circle cx="214.6" cy="158.5" r="5.6" fill="#fafafa" stroke="#222" stroke-width="1.2"/>
<circle cx="214.6" cy="158.5" r="2.3" fill="#222"/>
<!-- child triangles -->
<g fill="#e8e8e8" stroke="#111" stroke-width="1.2" stroke-linejoin="round">
<path d="M41.8 177.3 V187.7 L49.5 182.5 Z"/>
<path d="M41.8 201.3 V211.7 L49.5 206.5 Z"/>
<path d="M41.8 225.3 V235.7 L49.5 230.5 Z"/>
<path d="M41.8 249.3 V259.7 L49.5 254.5 Z"/>
<path d="M41.8 273.3 V283.7 L49.5 278.5 Z"/>
</g>
<!-- gear -->
<g transform="translate(70 182)" fill="#8f8f8f">
<circle r="5.6"/>
<g>
<rect x="-1.8" y="-7.8" width="3.6" height="15.6"/>
<rect x="-1.8" y="-7.8" width="3.6" height="15.6" transform="rotate(45)"/>
<rect x="-1.8" y="-7.8" width="3.6" height="15.6" transform="rotate(90)"/>
<rect x="-1.8" y="-7.8" width="3.6" height="15.6" transform="rotate(135)"/>
</g>
<circle r="2.5" fill="#f0f0f0"/>
</g>
<!-- folders -->
<g fill="#939393">
<path d="M62 199.6 H68 L69.5 201 H78 V211.6 H62 Z"/>
<path d="M87.2 223.7 H93.2 L94.7 225.1 H103.1 V236.2 H87.2 Z"/>
<path d="M87.2 247.7 H93.2 L94.7 249.1 H103.1 V260.2 H87.2 Z"/>
<path d="M87.2 271.7 H93.2 L94.7 273.1 H103.1 V284.2 H87.2 Z"/>
</g>
<g fill="#f0f0f0">
<rect x="62" y="202.2" width="16" height="0.9"/>
<rect x="87.2" y="226.3" width="16" height="0.9"/>
<rect x="87.2" y="250.3" width="16" height="0.9"/>
<rect x="87.2" y="274.3" width="16" height="0.9"/>
</g>
<!-- eyes -->
<g>
<path d="M62.3 230.5 Q70 222 77.8 230.5 Q70 239 62.3 230.5 Z" fill="none" stroke="#9a9a9a" stroke-width="1.1"/>
<circle cx="70" cy="230.5" r="2.4" fill="none" stroke="#9a9a9a" stroke-width="1"/>
<path d="M64.5 224.5 L76 237" stroke="#9a9a9a" stroke-width="1.1"/>
<path d="M62.3 254.5 Q70 246 77.8 254.5 Q70 263 62.3 254.5 Z" fill="#9a9a9a"/>
<circle cx="70" cy="254.5" r="3" fill="#f0f0f0"/><circle cx="70" cy="254.5" r="1.7" fill="#9a9a9a"/>
<path d="M62.3 278.5 Q70 270 77.8 278.5 Q70 287 62.3 278.5 Z" fill="#9a9a9a"/>
<circle cx="70" cy="278.5" r="3" fill="#f0f0f0"/><circle cx="70" cy="278.5" r="1.7" fill="#9a9a9a"/>
</g>
<!-- bodies dashed squiggle -->
<path d="M83.7 262 L86.7 259M89.7 262 L92.7 259M95.6 262 L98.6 259M101.6 262 L104.6 259M107.6 262 L110.6 259M113.5 262 L116.5 259M119.5 262 L122.5 259M125.5 262 L128.5 259M131.5 262 L134.5 259M137.4 262 L140.4 259M143.4 262 L146.4 259M149.4 262 L152.4 259M155.3 262 L158.3 259" stroke="#6a88b8" stroke-width="2.2"/>

</svg>
<div class="t" style="left:702px;top:10px;font-size:12.2px;color:#333">fensterwinkel v2</div>
<div class="t tab" style="left:152px;color:#0696d7">SOLID</div>
<div class="t tab" style="left:229px">SURFACE</div>
<div class="t tab" style="left:322px">MESH</div>
<div class="t tab" style="left:395px">SHEET METAL</div>
<div class="t tab" style="left:508px">PLASTIC</div>
<div class="t tab" style="left:596px">UTILITIES</div>
<div class="t" style="left:43.5px;top:64px;font-size:11px;font-weight:bold;color:#333;-webkit-text-stroke:0;transform:scaleX(0.9);transform-origin:0 0">DESIGN</div>
<div class="t lbl" style="left:236px">CREATE</div>
<div class="t lbl" style="left:504px">MODIFY</div>
<div class="t lbl" style="left:680px">ASSEMBLE</div>
<div class="t lbl" style="left:775px">CONSTRUCT</div>
<div class="t lbl" style="left:874px">INSPECT</div>
<div class="t lbl" style="left:953px">INSERT</div>
<div class="t lbl" style="left:1023px">SELECT</div>
<div class="t" style="left:30px;top:125px;font-size:11.5px;color:#555;transform:scaleX(0.87);transform-origin:0 0">BROWSER</div>
<div class="t" style="left:99px;top:152.5px;font-size:12px;font-weight:bold;color:#fff;-webkit-text-stroke:0">fensterwinkel v2</div>
<div class="t row" style="left:92.5px;top:177px;letter-spacing:-0.25px">Document Settings</div>
<div class="t row" style="left:92.5px;top:201px">Named Views</div>
<div class="t row" style="left:117px;top:225px">Origin</div>
<div class="t row" style="left:117px;top:249px">Bodies</div>
<div class="t row" style="left:117px;top:273px">Sketches</div>

</body></html>
